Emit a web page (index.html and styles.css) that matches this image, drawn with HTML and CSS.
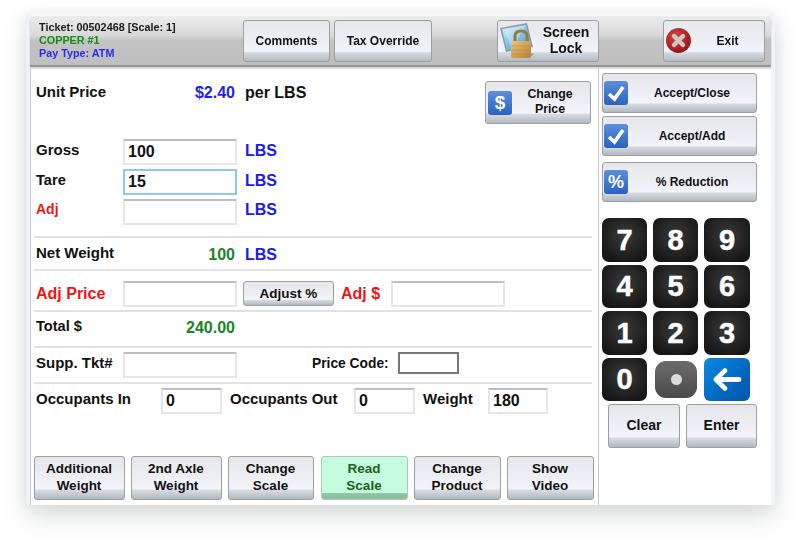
FILE: index.html
```html
<!DOCTYPE html>
<html lang="en">
<head>
<meta charset="utf-8">
<title>Ticket 00502468</title>
<link rel="stylesheet" href="styles.css">
</head>
<body>
<div class="window">
  <header class="toolbar">
    <div class="info">
      <div class="info-ticket">Ticket: 00502468 [Scale: 1]</div>
      <div class="info-product">COPPER #1</div>
      <div class="info-pay">Pay Type: ATM</div>
    </div>
    <button class="btn tb-comments">Comments</button>
    <button class="btn tb-tax">Tax Override</button>
    <button class="btn tb-lock with-icon">
      <svg class="lock-icon" viewBox="0 0 36 36" aria-hidden="true">
        <defs>
          <linearGradient id="scr" x1="0" y1="0" x2="1" y2="1"><stop offset="0" stop-color="#d8f0fb"/><stop offset=".5" stop-color="#7cc3ea"/><stop offset="1" stop-color="#3f97d2"/></linearGradient>
          <linearGradient id="gold" x1="0" y1="0" x2="1" y2="1"><stop offset="0" stop-color="#edc67c"/><stop offset="1" stop-color="#b67f2f"/></linearGradient>
        </defs>
        <path d="M0 5 L27 0 L33 24 L6 29 Z" fill="#8d9aa6"/>
        <path d="M2 6 L26 2 L31 23 L7 27 Z" fill="url(#scr)"/>
        <path d="M4 6 L26 2 L12 26 Z" fill="#fff" opacity=".3"/>
        <path d="M12 31 Q24 28 35 31 L30 34 L14 34 Z" fill="#9aa3a8"/>
        <path d="M15 19 V13 Q15 8 21 8 Q27 8 27 13 V19" fill="none" stroke="#9a7a3c" stroke-width="3"/>
        <rect x="11" y="18" width="20" height="17" rx="2" fill="url(#gold)"/>
        <path d="M12 23 H30 M12 27 H30 M12 31 H30" stroke="#a87a34" stroke-width=".6" opacity=".7"/>
      </svg>
      <span class="btn-text lock-text">Screen<br>Lock</span>
    </button>
    <button class="btn tb-exit with-icon">
      <svg class="exit-icon" viewBox="0 0 25 25" aria-hidden="true">
        <defs><radialGradient id="red" cx=".4" cy=".35" r=".75"><stop offset="0" stop-color="#d5474a"/><stop offset="1" stop-color="#8e0f14"/></radialGradient></defs>
        <circle cx="12.5" cy="12.5" r="12.5" fill="url(#red)"/>
        <path d="M8 8 L17 17 M17 8 L8 17" stroke="#cfc8c2" stroke-width="4.4" stroke-linecap="round"/>
      </svg>
      <span class="btn-text exit-text">Exit</span>
    </button>
  </header>

  <div class="body">
    <main class="main">
      <section class="block-weights">
        <div class="row-price">
          <span class="label price-label">Unit Price</span>
          <span class="value-blue">$2.40</span>
          <span class="unit-black">per LBS</span>
          <button class="btn btn-change with-icon">
            <span class="tile tile-change">$</span>
            <span class="btn-text change-text">Change<br>Price</span>
          </button>
        </div>
        <div class="row-field">
          <span class="label">Gross</span>
          <input class="field" type="text" value="100" readonly>
          <span class="unit">LBS</span>
        </div>
        <div class="row-field">
          <span class="label label-tare">Tare</span>
          <input class="field field-focus" type="text" value="15" readonly>
          <span class="unit">LBS</span>
        </div>
        <div class="row-field">
          <span class="label label-adj">Adj</span>
          <input class="field" type="text" readonly>
          <span class="unit unit-adj">LBS</span>
        </div>
      </section>

      <section class="row-net">
        <span class="label">Net Weight</span>
        <span class="value-green">100</span>
        <span class="unit">LBS</span>
      </section>

      <section class="row-adj">
        <span class="label-red">Adj Price</span>
        <input class="field" type="text" readonly>
        <button class="btn btn-adjust">Adjust %</button>
        <span class="label-red adj-dollar">Adj $</span>
        <input class="field" type="text" readonly>
      </section>

      <section class="row-total">
        <span class="label label-total">Total $</span>
        <span class="value-green">240.00</span>
      </section>

      <section class="row-supp">
        <span class="label">Supp. Tkt#</span>
        <input class="field" type="text" readonly>
        <span class="price-code">Price Code:</span>
        <span class="code-box"></span>
      </section>

      <section class="row-occ">
        <span class="label occ-in">Occupants In</span>
        <input class="field field-small" type="text" value="0" readonly>
        <span class="label occ-out">Occupants Out</span>
        <input class="field field-small" type="text" value="0" readonly>
        <span class="label occ-weight">Weight</span>
        <input class="field field-small" type="text" value="180" readonly>
      </section>

      <footer class="actions">
        <button class="btn action action-wide">Additional<br>Weight</button>
        <button class="btn action action-wide">2nd Axle<br>Weight</button>
        <button class="btn action action-scale">Change<br>Scale</button>
        <button class="btn action action-mid action-read btn-green">Read<br>Scale</button>
        <button class="btn action action-mid">Change<br>Product</button>
        <button class="btn action action-mid">Show<br>Video</button>
      </footer>
    </main>

    <aside class="side">
      <button class="btn side-btn with-icon">
        <span class="tile"><svg class="check" viewBox="0 0 24 24" aria-hidden="true"><path d="M5 13 L10.5 18 L19 6" fill="none" stroke="#fff" stroke-width="3.6"/></svg></span>
        <span class="btn-text">Accept/Close</span>
      </button>
      <button class="btn side-btn with-icon">
        <span class="tile"><svg class="check" viewBox="0 0 24 24" aria-hidden="true"><path d="M5 13 L10.5 18 L19 6" fill="none" stroke="#fff" stroke-width="3.6"/></svg></span>
        <span class="btn-text">Accept/Add</span>
      </button>
      <button class="btn side-btn side-gap with-icon">
        <span class="tile tile-percent">%</span>
        <span class="btn-text">% Reduction</span>
      </button>

      <div class="keypad">
        <button class="key">7</button>
        <button class="key">8</button>
        <button class="key">9</button>
        <button class="key">4</button>
        <button class="key">5</button>
        <button class="key">6</button>
        <button class="key">1</button>
        <button class="key">2</button>
        <button class="key">3</button>
        <button class="key">0</button>
        <button class="key key-dot"><span class="dot"></span></button>
        <button class="key key-back">
          <svg class="arrow" viewBox="0 0 34 26" aria-hidden="true"><path d="M14 3 L4 13 L14 23 M5 13 H30" fill="none" stroke="#fff" stroke-width="5.5" stroke-linecap="round" stroke-linejoin="round"/></svg>
        </button>
      </div>

      <div class="pad-actions">
        <button class="btn pad-clear">Clear</button>
        <button class="btn pad-enter">Enter</button>
      </div>
    </aside>
  </div>
</div>
</body>
</html>
```
FILE: styles.css
```css
* { box-sizing: border-box; }

html, body {
  margin: 0;
  height: 543px;
  overflow: hidden;
  background: #fff;
}

body {
  font-family: "Liberation Sans", Arial, sans-serif;
  font-weight: bold;
  color: #111;
}

.window {
  width: 749px;
  height: 492px;
  margin: 13px 0 0 26px;
  padding: 3px 4px 0;
  background: linear-gradient(90deg, #eef0f5, #f6f7fa 1%, #f6f7fa 99%, #f1f2f6);
  border-radius: 3px;
  box-shadow: 0 12px 26px rgba(90, 100, 100, .2), 0 2px 14px rgba(90, 100, 110, .1);
  filter: blur(.3px);
}

/* Toolbar */
.toolbar {
  display: flex;
  align-items: center;
  height: 49px;
  padding-left: 9px;
  background: linear-gradient(#ececec, #d8d8d8 40%, #c2c2c2 50%, #bfbfbf);
  border-radius: 3px 3px 0 0;
  box-shadow: 0 2px 1px #8f8f8f, 0 4px 2px #dcdcdc;
  position: relative;
}

.info { width: 204px; font-size: 10.8px; line-height: 13px; }
.info-ticket { color: #1a1a1a; }
.info-product { color: #1a8a1a; }
.info-pay { color: #2a2aee; }

.btn {
  display: block;
  padding: 0;
  border: 1px solid #98a0a6;
  border-radius: 3px;
  background: linear-gradient(#e6e6ea, #f2f4fb 76%, #d6dbe0 79%, #b2b9bf);
  color: #111;
  font-family: inherit;
  font-weight: bold;
  font-size: 12px;
  line-height: 15px;
  text-align: center;
}

.with-icon { display: flex; align-items: center; padding-left: 2px; }
.btn-text { flex: 1; text-align: center; }

.tb-comments { width: 87px; height: 42px; padding-top: 2px; }
.tb-tax { width: 98px; height: 42px; margin-left: 4px; padding-top: 2px; }
.tb-lock { width: 102px; height: 42px; margin-left: 65px; }
.tb-exit { width: 102px; height: 42px; margin-left: 64px; }

.lock-icon { width: 36px; height: 36px; flex: none; }
.lock-text { font-size: 14px; line-height: 16px; padding: 0 2px 2px 0; }
.exit-icon { width: 25px; height: 25px; flex: none; }
.exit-text { padding-top: 2px; }

/* Body */
.body { display: flex; height: 440px; background: #fff; }

.main {
  display: flex;
  flex-direction: column;
  width: 568px;
  padding: 0 6px 5px 3px;
  border-left: 1px solid #c9c9c9;
}

.side {
  width: 173px;
  padding: 8px 0 0 3px;
  border-left: 1px solid #c9c9c9;
}

.label { font-size: 15px; line-height: 18px; width: 87px; flex: none; padding-bottom: 5px; }
.label-tare { font-size: 14.6px; }
.label-adj { font-size: 14px; color: #f01414; padding-bottom: 7px; }
.label-total { font-size: 14.6px; }
.label-red { font-size: 16px; line-height: 18px; width: 87px; flex: none; color: #f01414; }

.unit { font-size: 16px; color: #1a1aee; margin-left: 8px; }
.row-field .unit { padding-bottom: 2px; }
.row-field .unit-adj { padding-bottom: 4px; }
.value-blue { font-size: 16px; line-height: 22px; width: 112px; margin-top: 2px; text-align: right; color: #2222ee; }
.unit-black { font-size: 16px; line-height: 22px; margin: 2px 0 0 10px; }
.value-green { font-size: 16px; width: 112px; text-align: right; color: #1a8424; }
.value-green + .unit { margin-left: 10px; }

.field {
  display: block;
  width: 114px;
  height: 26px;
  flex: none;
  padding: 0 3px;
  background: #fff;
  border: 2px solid #e6e6e6;
  border-top-color: #bdbdbd;
  border-radius: 0;
  outline: none;
  color: #111;
  font-family: inherit;
  font-weight: bold;
  font-size: 16px;
}
.field-focus { border-color: #8ec6ee; }
.field-small { width: 61px; }

/* Rows */
.block-weights {
  flex: none;
  display: flex;
  flex-direction: column;
  gap: 4px;
  height: 173px;
  padding-left: 2px;
  border-bottom: 2px solid #e2e2e2;
}

.row-price {
  display: flex;
  align-items: flex-start;
  height: 70px;
  padding: 15px 1px 0 0;
}
.price-label { padding-bottom: 0; line-height: 22px; margin-top: 1px; }
.btn-change { width: 106px; height: 43px; margin: 1px 0 0 auto; }
.change-text { font-size: 12.3px; padding: 0 2px 2px 0; }

.tile {
  display: block;
  flex: none;
  width: 24px;
  height: 24px;
  border-radius: 3px;
  background: linear-gradient(#5d8fdc, #2a62c0);
  color: #fff;
  line-height: 24px;
  text-align: center;
}
.side-btn .tile { margin-left: -1px; }
.tile-change { font-size: 19px; }
.tile-percent { font-size: 18px; }
.check { display: block; width: 24px; height: 24px; }

.row-field { display: flex; align-items: center; height: 26px; }

.row-net, .row-total {
  flex: none;
  display: flex;
  align-items: center;
  padding-left: 2px;
  border-bottom: 2px solid #e2e2e2;
}
.row-net { height: 33px; }
.row-total { height: 36px; }
.row-total .value-green { margin-bottom: 2px; }
.row-net .value-green { margin-top: 2px; }
.row-net .unit { margin-top: 2px; }
.row-net .label { padding-bottom: 2px; }
.row-total .label { padding-bottom: 6px; }

.row-adj {
  flex: none;
  display: flex;
  align-items: flex-start;
  height: 41px;
  padding: 10px 0 0 2px;
  border-bottom: 2px solid #e2e2e2;
}
.row-adj .label-red { margin-top: 4px; }
.btn-adjust { width: 91px; height: 25px; margin-left: 6px; font-size: 13.5px; }
.adj-dollar { width: 50px; margin-left: 7px; }

.row-supp {
  flex: none;
  display: flex;
  align-items: flex-start;
  height: 36px;
  padding: 4px 0 0 2px;
  border-bottom: 2px solid #e2e2e2;
}
.row-supp .label { padding: 2px 0 0; }
.price-code { width: 86px; margin: 3px 0 0 75px; font-size: 13.8px; line-height: 18px; }
.code-box { width: 61px; height: 22px; border: 2px solid #777; }

.row-occ { flex: 1; display: flex; align-items: flex-start; padding: 4px 0 0 2px; }
.row-occ .label { padding: 2px 0 0; }
.occ-in { width: 125px; }
.occ-out { width: 124px; margin-left: 8px; }
.occ-weight { width: 65px; margin-left: 8px; }
.row-occ .field-small:last-child { width: 60px; }

.actions { flex: none; display: flex; gap: 6px; margin-right: -2px; }
.action { flex: none; height: 44px; padding: 0 1px 3px 0; font-size: 13.5px; line-height: 17px; }
.action-wide { width: 91px; }
.action-scale { width: 86px; }
.action-mid { width: 87px; }
.action-read { margin-left: 1px; }

.btn-green {
  background: linear-gradient(#c4fcdd, #c4fcdd 86%, #8fc3a3 87%, #8ebf9f);
  border-color: #a9cbb5;
  color: #1f5f20;
}

.side-btn { width: 155px; height: 40px; margin-bottom: 3px; }
.side-gap { margin: 6px 0 0; }

/* Keypad */
.keypad {
  display: grid;
  grid-template-columns: 45px 45px 46px;
  grid-template-rows: 44px 43px 44px 43px;
  gap: 3px 6px;
  margin-top: 16px;
}

.key {
  display: flex;
  align-items: center;
  justify-content: center;
  padding: 0;
  border: 0;
  border-radius: 7px;
  background: radial-gradient(circle at 50% 40%, #3a3a3a, #161616 80%);
  color: #fff;
  font-family: inherit;
  font-weight: bold;
  font-size: 29px;
  -webkit-text-stroke: .5px #fff;
}

.key-dot {
  margin: 3px 1px 3px 2px;
  border-radius: 11px;
  background: linear-gradient(#6c6c6c, #4a4a4a);
}
.dot { width: 11px; height: 11px; border-radius: 50%; background: #d8dadc; }

.key-back { border-radius: 6px; background: linear-gradient(135deg, #0a8ae6, #0063b8 70%, #005aa6); }
.arrow { width: 31px; height: 23px; }

.pad-actions { display: flex; gap: 6px; margin: 3px 0 0 6px; }
.pad-clear { width: 72px; height: 44px; padding-bottom: 2px; font-size: 14px; }
.pad-enter { width: 71px; height: 44px; padding-bottom: 2px; font-size: 14px; }
```
